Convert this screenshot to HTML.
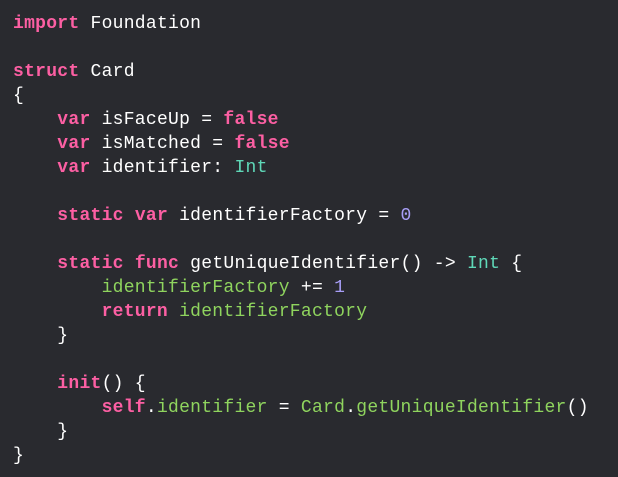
<!DOCTYPE html>
<html><head><meta charset="utf-8"><style>
html,body{margin:0;padding:0;background:#292a2f;width:618px;height:477px;overflow:hidden}
pre{margin:0;position:absolute;left:13px;top:12px;font-family:"Liberation Mono",monospace;font-size:18px;line-height:24px;color:#ffffff;letter-spacing:0.27px}
.k{color:#fc5fa3;font-weight:bold}
.g{color:#8fd45e}
.t{color:#5fd8b8}
.n{color:#a89ef7}
</style></head><body>
<pre><span class="k">import</span> Foundation

<span class="k">struct</span> Card
{
    <span class="k">var</span> isFaceUp = <span class="k">false</span>
    <span class="k">var</span> isMatched = <span class="k">false</span>
    <span class="k">var</span> identifier: <span class="t">Int</span>

    <span class="k">static</span> <span class="k">var</span> identifierFactory = <span class="n">0</span>

    <span class="k">static</span> <span class="k">func</span> getUniqueIdentifier() -&gt; <span class="t">Int</span> {
        <span class="g">identifierFactory</span> += <span class="n">1</span>
        <span class="k">return</span> <span class="g">identifierFactory</span>
    }

    <span class="k">init</span>() {
        <span class="k">self</span>.<span class="g">identifier</span> = <span class="g">Card</span>.<span class="g">getUniqueIdentifier</span>()
    }
}</pre>
</body></html>
